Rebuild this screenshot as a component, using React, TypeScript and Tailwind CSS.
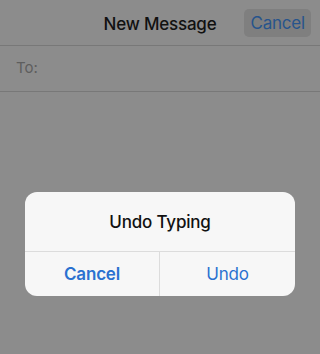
import React from 'react';

function App() {
  return (
    <div
      className="relative w-[320px] h-[354px] overflow-hidden bg-[#8c8c8c]"
      style={{ fontFamily: 'Inter, "Liberation Sans", sans-serif' }}
    >
      {/* nav bar */}
      <div className="relative flex items-center justify-center h-[46px] pt-[5px] border-b border-[#787878]">
        <span className="text-[17px] font-medium text-[#111111] tracking-[-0.2px]">New Message</span>
        <button className="absolute right-[9px] top-[9px] h-[28px] px-[6px] pt-[2px] rounded-[5px] bg-[#7f7f7f] text-[17px] text-[#27548c] tracking-[-0.2px]">
          Cancel
        </button>
      </div>

      {/* recipient row */}
      <div className="flex items-center h-[46px] px-[16px] border-b border-[#787878]">
        <span className="text-[15px] text-[#5e5e5e]">To:</span>
      </div>

      {/* alert */}
      <div className="absolute left-[25px] top-[192px] w-[270px] rounded-[12px] bg-[#f7f7f7] overflow-hidden">
        <div className="flex items-center justify-center h-[60px] pt-[2px] border-b border-[#dcdcdc]">
          <span className="text-[17px] font-medium text-[#111111] tracking-[-0.2px]">Undo Typing</span>
        </div>
        <div className="grid grid-cols-2 h-[44px]">
          <button className="flex items-center justify-center pt-[2px] border-r border-[#dcdcdc] text-[17px] font-semibold text-[#2a71d0] tracking-[-0.2px]">
            Cancel
          </button>
          <button className="flex items-center justify-center pt-[2px] text-[17px] text-[#2a71d0] tracking-[-0.2px]">
            Undo
          </button>
        </div>
      </div>
    </div>
  );
}

export default App;
